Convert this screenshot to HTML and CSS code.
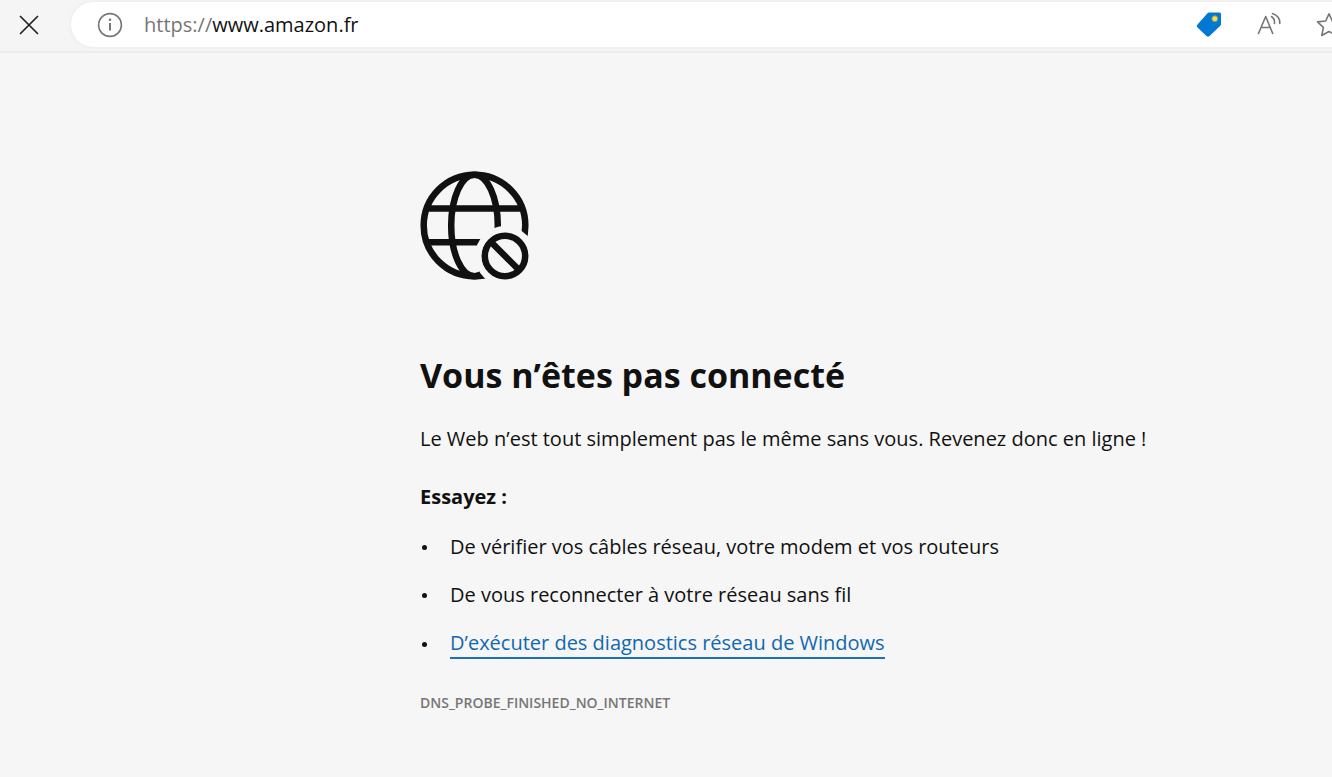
FILE: index.html
```html
<!DOCTYPE html>
<html lang="fr">
<head>
<meta charset="utf-8">
<title>www.amazon.fr</title>
<link rel="stylesheet" href="styles.css">
</head>
<body>
<header class="toolbar">
  <button class="icon-button stop" type="button" aria-label="Arrêter le chargement">
    <svg width="20" height="20" viewBox="0 0 20 20" fill="none" stroke="#222" stroke-width="1.7" stroke-linecap="round"><path d="M1.5 1.5l17 17M18.500 1.500l-17 17"/></svg>
  </button>
  <div class="address-bar">
    <button class="icon-button" type="button" aria-label="Informations sur le site">
      <svg width="26" height="26" viewBox="0 0 26 26" fill="none" stroke="#767676" stroke-width="1.600"><circle cx="13" cy="13" r="11.400"/><path d="M13 11v7.500" stroke-width="2"/><circle cx="13" cy="7.800" r="1.300" fill="#767676" stroke="none"/></svg>
    </button>
    <label class="scheme" for="address">https://</label>
    <input class="address" id="address" type="text" value="www.amazon.fr" spellcheck="false">
    <div class="actions">
      <button class="icon-button" type="button" aria-label="Offres">
        <svg width="26" height="26" viewBox="0 0 26 26"><path d="M13 .5H23.500Q25 .5 25 2V12Q25 13 24.300 13.700L13.500 24Q12 25.500 10.500 24L1.500 15.500Q0 14 1.500 12.500L11.500 1.200Q12.100 .5 13 .5Z" fill="#0078d4"/><circle cx="18.800" cy="6.700" r="2.900" fill="#ffd75e" stroke="#9b9a4c"/></svg>
      </button>
      <button class="icon-button" type="button" aria-label="Lecture à voix haute">
        <svg width="26" height="26" viewBox="0 0 26 26" fill="none" stroke="#767676" stroke-width="1.600" stroke-linecap="round" stroke-linejoin="round"><path d="M2.500 21.500L9.700 4.500L16.700 21.500M5.200 15.500H14.200"/><path d="M15.500 4.500Q19 7 18.500 11.500M16.500 1.500Q24.500 4.500 23.800 11.500"/></svg>
      </button>
      <button class="icon-button" type="button" aria-label="Ajouter aux favoris">
        <svg width="26" height="26" viewBox="0 0 26 26" fill="none" stroke="#767676" stroke-width="1.600" stroke-linejoin="round"><path d="M13 1.800L16.300 9L24.500 9.900L18.600 15.400L20.200 23.500L13 19.500L5.800 23.500L7.400 15.400L1.500 9.900L9.700 9Z"/></svg>
      </button>
    </div>
  </div>
</header>
<main class="error-page">
  <svg class="globe" width="110" height="110" viewBox="-1.500 -.5 110 110" fill="none" stroke="#111" stroke-width="6.500" aria-hidden="true">
    <defs>
      <mask id="badge-gap" maskUnits="userSpaceOnUse" x="-1" y="-1" width="110" height="110"><path fill="#fff" stroke="none" d="M-1-1h110v110H-1z"/><circle cx="84.500" cy="84.500" r="30" fill="#000" stroke="none"/></mask>
    </defs>
    <g mask="url(#badge-gap)"><circle cx="54" cy="54" r="50.800"/><ellipse cx="54" cy="54" rx="23.300" ry="50.800"/><path d="M8 37H100M8 70.800H100"/></g>
    <circle cx="84.500" cy="84.500" r="20.200"/><path d="M70.500 70.500l28 28"/>
  </svg>
  <h1 class="title">Vous n’êtes pas connecté</h1>
  <p class="message">Le Web n’est tout simplement pas le même sans vous. Revenez donc en ligne !</p>
  <h2 class="subtitle">Essayez :</h2>
  <ul class="tips">
    <li class="tip">De vérifier vos câbles réseau, votre modem et vos routeurs</li>
    <li class="tip">De vous reconnecter à votre réseau sans fil</li>
    <li class="tip"><a class="link" href="#diagnostics">D’exécuter des diagnostics réseau de Windows</a></li>
  </ul>
  <p class="code">DNS_PROBE_FINISHED_NO_INTERNET</p>
</main>
</body>
</html>
```
FILE: styles.css
```css
* { box-sizing: border-box; }

body {
  margin: 0;
  background: #f6f6f6;
  color: #111;
  font-family: "Open Sans", "Noto Sans", sans-serif;
  font-size: 20px;
  line-height: 28px;
  overflow-x: hidden;
}

.toolbar {
  display: flex;
  align-items: center;
  gap: 32px;
  padding: 2px 0 4px 19px;
  background: #f5f5f5;
  border-bottom: 2px solid #ececec;
}

.icon-button {
  display: flex;
  flex: none;
  padding: 0;
  border: 0;
  background: none;
}

.address-bar {
  display: flex;
  flex: 1;
  align-items: center;
  min-width: 0;
  height: 45px;
  padding-left: 26px;
  margin-right: -11px;
  border-radius: 23px 0 0 23px;
  background: #fff;
  box-shadow: 0 0 3px 1px #ececec;
}

.scheme {
  margin-left: 21px;
  color: #767676;
}

.address {
  flex: 1;
  min-width: 0;
  padding: 0;
  border: 0;
  outline: 0;
  background: none;
  color: #111;
  font: inherit;
}

.actions {
  display: flex;
  gap: 34px;
  margin-right: 1px;
}

.error-page {
  max-width: 1200px;
  padding: 118px 20px 40px 420px;
}

.globe {
  display: block;
  margin-left: -1px;
}

.title {
  margin: 70px 0 0;
  font-size: 34px;
  line-height: 48px;
}

.message { margin: 26px 0 0; }

.subtitle {
  margin: 30px 0 0;
  font-size: 20px;
  line-height: 28px;
}

.tips {
  display: grid;
  gap: 20px;
  margin: 22px 0 0;
  padding: 0;
  list-style: none;
}

.tip {
  display: flex;
  align-items: center;
}

.tip::before {
  content: "";
  flex: none;
  width: 5px;
  height: 5px;
  margin: 0 23px 0 2px;
  border-radius: 50%;
  background: #111;
}

.link {
  border-bottom: 2px solid #1a73ba;
  color: #1068b0;
  line-height: 28px;
  text-decoration: none;
}

.code {
  margin: 34px 0 0;
  color: #767676;
  font-size: 14px;
  font-weight: 600;
  line-height: 20px;
}
```
